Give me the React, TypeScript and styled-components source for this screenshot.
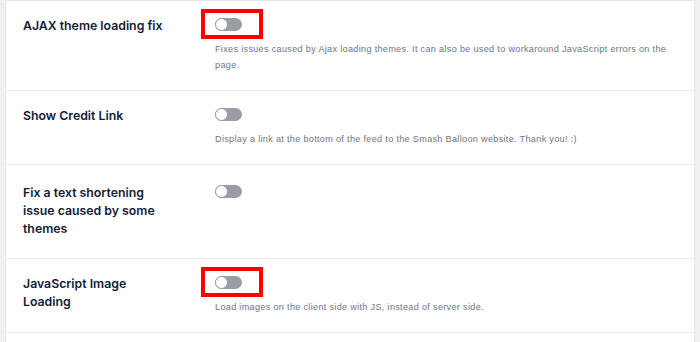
import React from 'react';
import styled, { createGlobalStyle } from 'styled-components';

const GlobalStyle = createGlobalStyle`
  html, body {
    margin: 0;
    padding: 0;
    background: #f0f0f1;
  }
  body {
    font-family: Inter, "Noto Sans", sans-serif;
    -webkit-font-smoothing: antialiased;
  }
`;

const settings = [
  {
    label: 'AJAX theme loading fix',
    desc: 'Fixes issues caused by Ajax loading themes. It can also be used to workaround JavaScript errors on the page.',
    marked: true,
  },
  {
    label: 'Show Credit Link',
    desc: 'Display a link at the bottom of the feed to the Smash Balloon website. Thank you! :)',
    marked: false,
  },
  {
    label: 'Fix a text shortening issue caused by some themes',
    desc: '',
    marked: false,
    tall: true,
  },
  {
    label: 'JavaScript Image Loading',
    desc: 'Load images on the client side with JS, instead of server side.',
    marked: true,
  },
];

function App() {
  return <Page>
    <GlobalStyle />
    <Panel>
      {settings.map((item) => {
        return <Row key={item.label} $tall={item.tall}>
          <Label>{item.label}</Label>
          <Control>
            <ToggleWrap>
              <Toggle>
                <Knob />
              </Toggle>
              {item.marked && <Highlight />}
            </ToggleWrap>
            {item.desc && <Desc>{item.desc}</Desc>}
          </Control>
        </Row>;
      })}
      <Row />
    </Panel>
  </Page>;
};

const Page = styled.div`
  width: 700px;
  height: 342px;
  overflow: hidden;
  padding: 0 5px;
  box-sizing: border-box;
`;

const Panel = styled.div`
  background: #ffffff;
  border: 1px solid #e6e6e8;
  border-bottom: none;
`;

const Row = styled.div<{ $tall?: boolean }>`
  display: grid;
  grid-template-columns: 192px 1fr;
  padding: ${(props) => (props.$tall ? '19px 20px 20px 17px' : '16px 20px 17px 17px')};
  border-bottom: 1px solid #ececee;
  min-height: 8px;
`;

const Label = styled.div`
  font-size: 12.3px;
  font-weight: 600;
  line-height: 18px;
  color: #141b38;
  max-width: 146px;
`;

const Control = styled.div`
  display: flex;
  flex-direction: column;
  align-items: flex-start;
`;

const ToggleWrap = styled.div`
  position: relative;
  margin-top: 1px;
`;

const Toggle = styled.div`
  width: 27px;
  height: 13px;
  border-radius: 7px;
  background: #9a9ca6;
  position: relative;
`;

const Knob = styled.div`
  position: absolute;
  left: 0;
  top: 0;
  width: 13px;
  height: 13px;
  box-sizing: border-box;
  border-radius: 50%;
  background: #ffffff;
  border: 1.5px solid #9a9ca6;
`;

const Highlight = styled.div`
  position: absolute;
  left: -14px;
  top: -9px;
  width: 62px;
  height: 30px;
  box-sizing: border-box;
  border: 4px solid #ff0000;
`;

const Desc = styled.div`
  margin-top: 10px;
  font-family: "Liberation Sans", Arial, sans-serif;
  font-size: 9.1px;
  line-height: 16px;
  letter-spacing: 0.32px;
  color: #71747f;
`;

export default App;
